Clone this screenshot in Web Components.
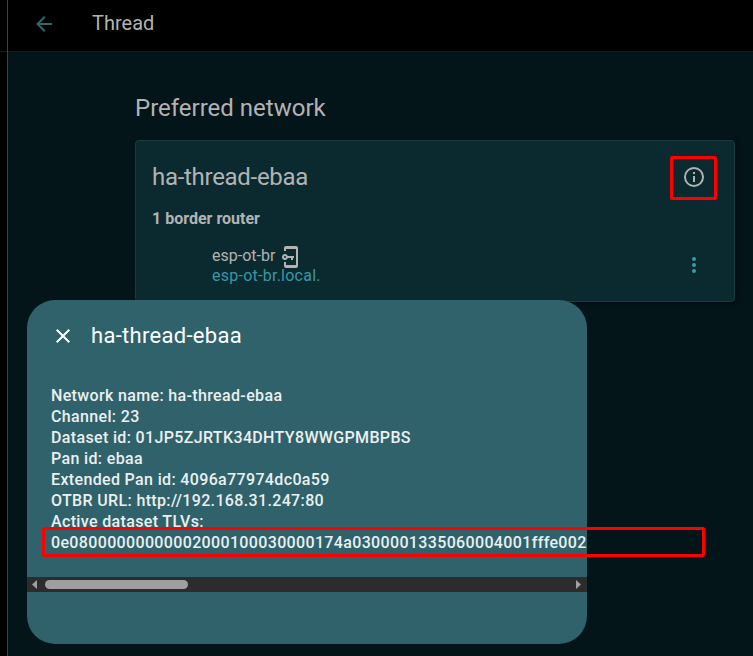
<!DOCTYPE html>
<html lang="en"><head><meta charset="utf-8"><title>Thread</title>
<style>html,body{margin:0;width:753px;height:656px;overflow:hidden;background:#04151a;font-family:Roboto,sans-serif}</style></head>
<body><thread-page></thread-page>
<script>
const define=(name,html)=>customElements.define(name,class extends HTMLElement{
  constructor(){super();this.attachShadow({mode:'open'}).innerHTML=html;}
});

define('app-header',`<style>
:host{display:flex;height:51px;box-sizing:border-box;align-items:center;background:#000;color:#b3b3b3;padding:0 0 5px 24px}
svg{width:24px;height:24px;fill:#2b686f;flex:none;margin-top:1px}
h1{margin:0 0 0 36px;font-size:20px;line-height:24px;font-weight:400}
</style><svg viewBox="0 0 24 24"><path d="M20 11v2H8l5.5 5.5-1.42 1.42L4.16 12l7.92-7.92L13.5 5.5 8 11z"/></svg><h1><slot></slot></h1>`);

define('border-router',`<style>
:host{display:flex;align-items:center;justify-content:space-between;color:#b3b3b3;font-size:16px;line-height:20px}
.name{display:flex;height:20px;align-items:center}
.name svg{width:24px;height:24px;fill:#b3b3b3;margin-left:4px;position:relative;top:1px}
.host{color:#3b97a5;letter-spacing:.25px}
.menu{width:24px;height:24px;fill:#3e97a5;margin:0 28px 2px 0}
</style><div><div class="name"><slot name="name"></slot><svg viewBox="0 0 24 24"><path d="M7 1h10a2 2 0 0 1 2 2v18a2 2 0 0 1-2 2H7a2 2 0 0 1-2-2v-4h2v3h10V4H7v2H5V3a2 2 0 0 1 2-2z"/><path fill-rule="evenodd" d="M6 9a3 3 0 0 1 2.8 2H15v2h-1v2h-2v-2H8.8A3 3 0 1 1 6 9zm0 2a1 1 0 1 0 0 2 1 1 0 0 0 0-2z"/></svg></div><div class="host"><slot name="host"></slot></div></div>
<svg class="menu" viewBox="0 0 24 24"><circle cx="12" cy="6" r="2"/><circle cx="12" cy="12" r="2"/><circle cx="12" cy="18" r="2"/></svg>`);

define('network-card',`<style>
:host{display:block;box-sizing:border-box;width:600px;height:162px;border:1px solid #1c3b3e;border-radius:4px;background:#0a2a2f;color:#b3b3b3;box-shadow:2px 2px 4px #020d10}
header{display:flex;justify-content:space-between;padding:12px 17px 0 16px}
h2{margin:0;font-size:24px;line-height:48px;font-weight:400;letter-spacing:-.29px}
.info{box-sizing:border-box;width:47px;height:44px;border:3px solid #f00;border-radius:2px;margin-top:3px;display:grid;place-items:center}
.info svg{width:24px;height:24px;fill:#b3b3b3;display:block;position:relative;top:-1px}
h3{margin:8px 0 0 16px;font-size:16px;line-height:20px;font-weight:700}
.rows{padding:17px 0 0 76px}
</style><header><h2><slot name="title"></slot></h2><div class="info"><svg viewBox="0 0 24 24"><path d="M11 9h2V7h-2m1 13c-4.41 0-8-3.59-8-8s3.59-8 8-8 8 3.59 8 8-3.59 8-8 8m0-18A10 10 0 1 0 12 22 10 10 0 0 0 12 2m-1 15h2v-6h-2z"/></svg></div></header><h3><slot name="summary"></slot></h3><div class="rows"><slot></slot></div>`);

define('scroll-track',`<style>
:host{display:flex;height:15px;background:#2c2c2c;align-items:center;justify-content:space-between;padding:0 6px 0 5px;box-sizing:border-box}
svg{width:5px;height:9px;fill:#9f9f9f}
.rail{flex:1;margin:0 8px}.thumb{width:143px;height:9px;border-radius:5px;background:#9f9f9f}
</style><svg viewBox="0 0 5 9"><path d="M5 0v9L0 4.5z"/></svg><div class="rail"><div class="thumb"></div></div><svg viewBox="0 0 5 9"><path d="M0 0v9l5-4.5z"/></svg>`);

define('dataset-dialog',`<style>
:host{display:flex;flex-direction:column;box-sizing:border-box;width:560px;height:344px;border-radius:28px;overflow:hidden;background:#30626b;color:#fff}
header{display:flex;align-items:center;padding:24px 24px 0;height:24px}
header svg{width:24px;height:24px;fill:#fff}
h2{margin:0 0 0 16px;font-size:22px;line-height:24px;font-weight:400;letter-spacing:.3px}
.body{color:#ebf0f0;margin-top:37px;padding-left:24px;font-size:16px;line-height:21px;font-weight:500;letter-spacing:.35px;height:192px;white-space:nowrap}
</style><header><svg viewBox="0 0 24 24"><path d="M19 6.41 17.59 5 12 10.59 6.41 5 5 6.41 10.59 12 5 17.59 6.41 19 12 13.41 17.59 19 19 17.59 13.41 12z"/></svg><h2><slot name="title"></slot></h2></header><div class="body"><slot></slot></div><scroll-track></scroll-track>`);

define('thread-page',`<style>
:host{display:grid;grid-template-columns:8px 1fr;height:656px;position:relative}
.rail{background:linear-gradient(#191919,#191919) 0 51px/7px 1px no-repeat #000;border-right:1px solid #29484e;box-sizing:border-box}
main{background:#04151a}
.content{padding:38px 0 0 127px;border-top:1px solid #121b1d}
h2{margin:0 0 14px;font-size:24px;line-height:36px;font-weight:400;color:#b3b3b3}
dataset-dialog{position:absolute;left:27px;top:300px}
.mark{position:absolute;left:42px;top:527px;width:663px;height:30px;border:3px solid #f00;border-radius:2px;box-sizing:border-box}
</style><div class="rail"></div><main><app-header>Thread</app-header><div class="content"><h2>Preferred network</h2>
<network-card><span slot="title">ha-thread-ebaa</span><span slot="summary">1 border router</span><border-router><span slot="name">esp-ot-br</span><span slot="host">esp-ot-br.local.</span></border-router></network-card></div></main>
<dataset-dialog><span slot="title">ha-thread-ebaa</span><div>Network name: ha-thread-ebaa</div><div>Channel: 23</div><div>Dataset id: 01JP5ZJRTK34DHTY8WWGPMBPBS</div><div>Pan id: ebaa</div><div>Extended Pan id: 4096a77974dc0a59</div><div>OTBR URL: http://192.168.31.247:80</div><div>Active dataset TLVs:</div><div>0e08000000000002000100030000174a0300001335060004001fffe0020</div></dataset-dialog><div class="mark"></div>`);
</script></body></html>
